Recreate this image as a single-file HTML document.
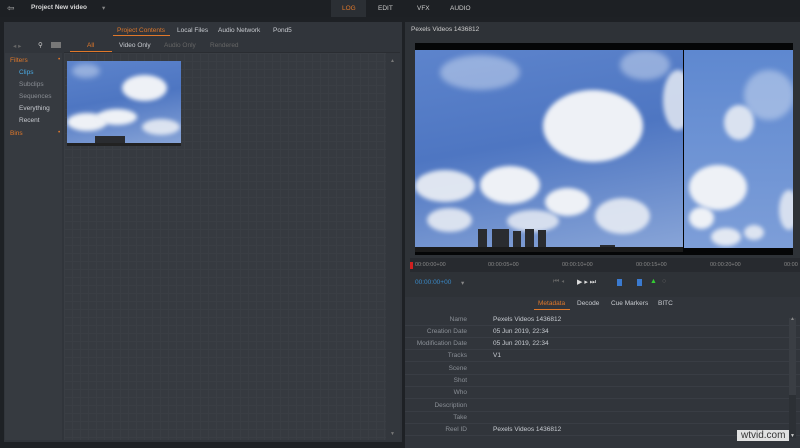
<!DOCTYPE html>
<html><head><meta charset="utf-8">
<style>
*{margin:0;padding:0;box-sizing:border-box}
body{width:800px;height:448px;overflow:hidden;background:#1e2125;font-family:"Liberation Sans",sans-serif;font-size:6.5px;color:#c8cbd0;position:relative}
.a{position:absolute}
.or{color:#e0782a}
.sky{background:linear-gradient(170deg,#5d84cc,#4e76c2 45%,#8aa6d8 100%);overflow:hidden}
.cl{position:absolute;background:#eef1f6;border-radius:50%;filter:blur(2px)}
.wisp{position:absolute;background:rgba(225,232,246,.45);border-radius:50%;filter:blur(3px)}
.bld{position:absolute;background:#2a2c30}
.row{position:absolute;left:405px;width:395px;height:12px;border-bottom:1px solid #393d44}
.row .k{position:absolute;right:333px;top:2px;color:#8a8f96;text-align:right}
.row .v{position:absolute;left:88px;top:2px;color:#c8ccd2}
</style></head><body>
<div class="a" style="left:0;top:0;width:800px;height:17px;background:#1d2024"></div>
<div class="a" style="left:7px;top:3px;font-size:9px;color:#aaa">⇦</div>
<div class="a" style="left:31px;top:4px;color:#d8d8d8;font-weight:bold">Project New video</div>
<div class="a" style="left:102px;top:4px;color:#888">▾</div>
<div class="a" style="left:331px;top:0;width:35px;height:17px;background:#2b2f34"></div>
<div class="a or" style="left:342px;top:5px">LOG</div>
<div class="a" style="left:378px;top:5px;color:#ccc">EDIT</div>
<div class="a" style="left:417px;top:5px;color:#ccc">VFX</div>
<div class="a" style="left:450px;top:5px;color:#ccc">AUDIO</div>

<div class="a" style="left:4px;top:22px;width:398px;height:420px;background:#31353b"></div>
<div class="a or" style="left:117px;top:27px">Project Contents</div>
<div class="a" style="left:113px;top:35px;width:57px;height:1px;background:#e0782a"></div>
<div class="a" style="left:177px;top:27px">Local Files</div>
<div class="a" style="left:218px;top:27px">Audio Network</div>
<div class="a" style="left:273px;top:27px">Pond5</div>
<div class="a" style="left:13px;top:42px;color:#666">◂ ▸</div>
<div class="a" style="left:38px;top:41px;color:#ccc">⚲</div>
<div class="a" style="left:51px;top:42px;width:10px;height:6px;background:#777"></div>
<div class="a or" style="left:87px;top:42px">All</div>
<div class="a" style="left:70px;top:51px;width:42px;height:1px;background:#e0782a"></div>
<div class="a" style="left:119px;top:42px">Video Only</div>
<div class="a" style="left:164px;top:42px;color:#666">Audio Only</div>
<div class="a" style="left:210px;top:42px;color:#666">Rendered</div>
<div class="a" style="left:64px;top:52px;width:336px;height:1px;background:#2a2d32"></div>
<div class="a" style="left:5px;top:53px;width:57px;height:387px;background:#363a40"></div>
<div class="a or" style="left:10px;top:57px">Filters</div><div class="a or" style="left:58px;top:56px">•</div>
<div class="a" style="left:19px;top:69px;color:#4aa8e0">Clips</div>
<div class="a" style="left:19px;top:81px;color:#8a8e94">Subclips</div>
<div class="a" style="left:19px;top:93px;color:#8a8e94">Sequences</div>
<div class="a" style="left:19px;top:105px">Everything</div>
<div class="a" style="left:19px;top:117px">Recent</div>
<div class="a or" style="left:10px;top:130px">Bins</div><div class="a or" style="left:58px;top:129px">•</div>
<div class="a" style="left:64px;top:53px;width:322px;height:387px;background-color:#363a40;background-image:linear-gradient(#3a3e44 1px,transparent 1px),linear-gradient(90deg,#3a3e44 1px,transparent 1px);background-size:8px 8px"></div>
<div class="a" style="left:386px;top:53px;width:14px;height:387px;background:#33373d"></div>
<div class="a" style="left:390px;top:58px;color:#777;font-size:5px">▲</div>
<div class="a" style="left:390px;top:431px;color:#777;font-size:5px">▼</div>
<div class="a sky" style="left:67px;top:61px;width:114px;height:85px">
 <div class="wisp" style="left:5px;top:3px;width:28px;height:14px"></div>
 <div class="cl" style="left:55px;top:14px;width:45px;height:26px"></div>
 <div class="cl" style="left:0;top:52px;width:40px;height:18px"></div>
 <div class="cl" style="left:30px;top:48px;width:40px;height:16px"></div>
 <div class="cl" style="left:75px;top:58px;width:38px;height:16px;opacity:.85"></div>
 <div class="bld" style="left:28px;top:75px;width:30px;height:8px"></div>
 <div class="a" style="left:0;top:82px;width:114px;height:3px;background:#222"></div>
</div>

<div class="a" style="left:405px;top:22px;width:395px;height:275px;background:#2e3237"></div>
<div class="a" style="left:411px;top:26px;color:#ccc">Pexels Videos 1436812</div>
<div class="a" style="left:415px;top:43px;width:378px;height:212px;background:#050607"></div>
<div class="a sky" style="left:415px;top:50px;width:268px;height:202px">
 <div class="wisp" style="left:25px;top:5px;width:80px;height:35px"></div>
 <div class="wisp" style="left:205px;top:0;width:50px;height:30px"></div>
 <div class="cl" style="left:128px;top:40px;width:100px;height:72px"></div>
 <div class="cl" style="left:248px;top:20px;width:30px;height:60px;opacity:.8"></div>
 <div class="cl" style="left:0;top:120px;width:60px;height:32px;opacity:.9"></div>
 <div class="cl" style="left:65px;top:116px;width:60px;height:38px"></div>
 <div class="cl" style="left:130px;top:138px;width:45px;height:28px"></div>
 <div class="cl" style="left:12px;top:158px;width:45px;height:24px;opacity:.85"></div>
 <div class="cl" style="left:92px;top:160px;width:52px;height:22px;opacity:.8"></div>
 <div class="cl" style="left:180px;top:148px;width:55px;height:36px;opacity:.85"></div>
 <div class="bld" style="left:63px;top:179px;width:9px;height:23px"></div>
 <div class="bld" style="left:77px;top:179px;width:17px;height:23px"></div>
 <div class="bld" style="left:98px;top:181px;width:8px;height:21px"></div>
 <div class="bld" style="left:110px;top:179px;width:9px;height:23px"></div>
 <div class="bld" style="left:123px;top:180px;width:8px;height:22px"></div>
 <div class="bld" style="left:185px;top:195px;width:15px;height:7px"></div>
 <div class="a" style="left:0;top:197px;width:268px;height:5px;background:#1b1b1b"></div>
</div>
<div class="a sky" style="left:684px;top:50px;width:109px;height:198px;background:linear-gradient(#5e88d0,#7d9ed8)">
 <div class="wisp" style="left:60px;top:20px;width:50px;height:50px"></div>
 <div class="cl" style="left:40px;top:55px;width:30px;height:35px;opacity:.85"></div>
 <div class="cl" style="left:5px;top:115px;width:58px;height:45px"></div>
 <div class="cl" style="left:5px;top:157px;width:25px;height:22px"></div>
 <div class="cl" style="left:27px;top:178px;width:30px;height:18px;opacity:.9"></div>
 <div class="cl" style="left:60px;top:175px;width:20px;height:15px;opacity:.85"></div>
 <div class="cl" style="left:95px;top:140px;width:20px;height:40px;opacity:.8"></div>
</div>
<div class="a" style="left:410px;top:258px;width:390px;height:14px;background:#272a2f"></div>
<div class="a" style="left:410px;top:262px;width:3px;height:7px;background:#d02020"></div>
<div class="a" style="left:415px;top:262px;color:#888;font-size:5.5px">00:00:00+00</div>
<div class="a" style="left:488px;top:262px;color:#888;font-size:5.5px">00:00:05+00</div>
<div class="a" style="left:562px;top:262px;color:#888;font-size:5.5px">00:00:10+00</div>
<div class="a" style="left:636px;top:262px;color:#888;font-size:5.5px">00:00:15+00</div>
<div class="a" style="left:710px;top:262px;color:#888;font-size:5.5px">00:00:20+00</div>
<div class="a" style="left:784px;top:262px;color:#888;font-size:5.5px">00:00</div>
<div class="a" style="left:415px;top:279px;color:#3a8ac8">00:00:00+00</div>
<div class="a" style="left:461px;top:279px;color:#888">▾</div>
<div class="a" style="left:553px;top:278px;color:#666;font-size:7px">⏮ ◂</div>
<div class="a" style="left:577px;top:278px;color:#ddd;font-size:7px">▶ ▸ ⏭</div>
<div class="a" style="left:617px;top:279px;width:5px;height:7px;background:#3a7ad0"></div>
<div class="a" style="left:637px;top:279px;width:5px;height:7px;background:#3a7ad0"></div>
<div class="a" style="left:650px;top:278px;color:#3c3;font-size:7px">▲</div>
<div class="a" style="left:662px;top:278px;color:#666;font-size:7px">○</div>
<div class="a" style="left:405px;top:297px;width:395px;height:151px;background:#31353b"></div>
<div class="a or" style="left:538px;top:300px">Metadata</div>
<div class="a" style="left:534px;top:309px;width:36px;height:1px;background:#e0782a"></div>
<div class="a" style="left:577px;top:300px">Decode</div>
<div class="a" style="left:611px;top:300px">Cue Markers</div>
<div class="a" style="left:658px;top:300px">BITC</div>
<div class="row" style="top:314px"><span class="k">Name</span><span class="v">Pexels Videos 1436812</span></div>
<div class="row" style="top:326px"><span class="k">Creation Date</span><span class="v">05 Jun 2019, 22:34</span></div>
<div class="row" style="top:338px"><span class="k">Modification Date</span><span class="v">05 Jun 2019, 22:34</span></div>
<div class="row" style="top:350px"><span class="k">Tracks</span><span class="v">V1</span></div>
<div class="row" style="top:363px"><span class="k">Scene</span></div>
<div class="row" style="top:375px"><span class="k">Shot</span></div>
<div class="row" style="top:387px"><span class="k">Who</span></div>
<div class="row" style="top:400px"><span class="k">Description</span></div>
<div class="row" style="top:412px"><span class="k">Take</span></div>
<div class="row" style="top:424px"><span class="k">Reel ID</span><span class="v">Pexels Videos 1436812</span></div>
<div class="a" style="left:789px;top:318px;width:7px;height:120px;background:#3a3e44"></div>
<div class="a" style="left:789px;top:395px;width:7px;height:43px;background:#2c3035"></div>
<div class="a" style="left:790px;top:316px;color:#888;font-size:5px">▲</div>
<div class="a" style="left:790px;top:433px;color:#ccc;font-size:5px">▼</div>
<div class="a" style="left:737px;top:430px;font-size:10px;color:#333;background:rgba(255,255,255,.85);padding:0 4px">wtvid.com</div>
</body></html>
